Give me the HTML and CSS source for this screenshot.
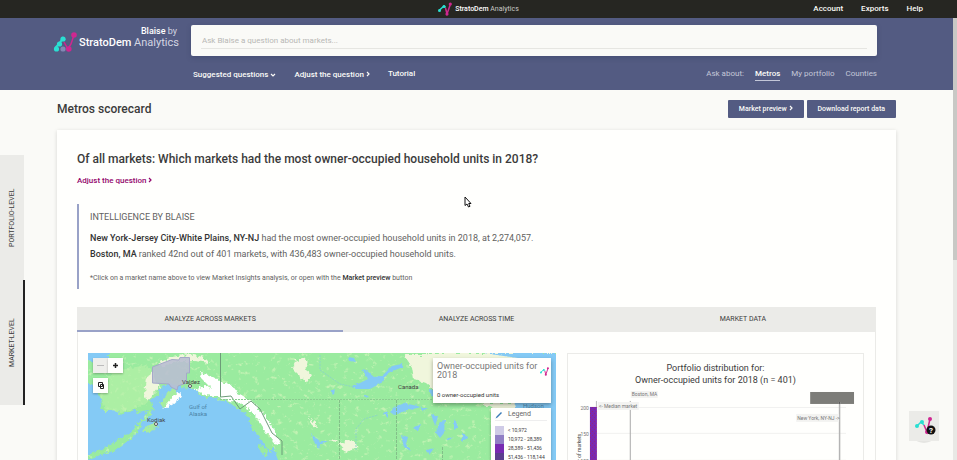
FILE: index.html
```html
<!DOCTYPE html>
<html lang="en">
<head>
<meta charset="utf-8">
<meta name="viewport" content="width=device-width, initial-scale=1">
<title>StratoDem Analytics</title>
<link rel="stylesheet" href="styles.css">
</head>
<body>
<svg class="defs" aria-hidden="true">
  <symbol id="mark" viewBox="0 0 24 22">
    <path d="M2 17 L6 13 L10 7 L12 9" fill="none" stroke="#2adfd2" stroke-width="2"/>
    <path d="M11 11 L15 18 L18 13 L21 4" fill="none" stroke="#cf2790" stroke-width="1.500"/>
    <circle cx="3.500" cy="18" r="2.600" fill="#2adfd2"/><circle cx="6.500" cy="13" r="2.600" fill="#2adfd2"/><circle cx="10" cy="8" r="2.600" fill="#2adfd2"/>
    <circle cx="10" cy="18" r="2.600" fill="#8288b4"/>
    <circle cx="15.800" cy="18" r="2.800" fill="#cf2790"/><circle cx="21" cy="4" r="2.800" fill="#cf2790"/>
  </symbol>
  <symbol id="mark-line" viewBox="0 0 14 14">
    <path d="M1 8.500 L6 4 L7.500 5.500" fill="none" stroke="#2adfd2" stroke-width="1.500"/>
    <path d="M7.500 6 L9 12 L12.500 2" fill="none" stroke="#cf2790" stroke-width="1.500"/>
    <circle cx="1.500" cy="8.500" r="1.500" fill="#2adfd2"/><circle cx="6" cy="4.500" r="1.500" fill="#2adfd2"/>
    <circle cx="9" cy="12" r="1.600" fill="#cf2790"/><circle cx="12.300" cy="2" r="1.600" fill="#cf2790"/>
  </symbol>
  <symbol id="right" viewBox="0 0 4 6"><path d="M1 1 L3 3 L1 5" fill="none" stroke="currentColor" stroke-width="1.200"/></symbol>
  <symbol id="down" viewBox="0 0 6 4"><path d="M1 1 L3 3 L5 1" fill="none" stroke="currentColor" stroke-width="1.200"/></symbol>
</svg>

<header class="topbar">
  <span></span>
  <a class="topbrand" href="#"><svg width="14" height="14"><use href="#mark-line"/></svg><span><b>StratoDem</b> Analytics</span></a>
  <nav class="topnav"><a href="#">Account</a><a href="#">Exports</a><a href="#">Help</a></nav>
</header>

<div class="viewport">
  <div class="page">
    <div class="hero">
      <a class="brand" href="#">
        <span class="brand-by"><b>Blaise</b> by</span>
        <span class="brand-name"><svg width="24" height="22"><use href="#mark"/></svg><span><b>StratoDem</b> Analytics</span></span>
      </a>
      <div class="ask">
        <div class="search"><input type="text" aria-label="Ask Blaise a question" placeholder="Ask Blaise a question about markets..."></div>
        <div class="asknav">
          <nav class="menu">
            <button type="button">Suggested questions <svg width="6" height="4"><use href="#down"/></svg></button>
            <button type="button">Adjust the question <svg width="4" height="6"><use href="#right"/></svg></button>
            <a href="#">Tutorial</a>
          </nav>
          <nav class="about"><span>Ask about:</span><a class="on" href="#">Metros</a><a href="#">My portfolio</a><a href="#">Counties</a></nav>
        </div>
      </div>
    </div>

    <main>
      <div class="heading">
        <h1>Metros scorecard</h1>
        <div class="actions">
          <button type="button">Market preview <svg width="4" height="6"><use href="#right"/></svg></button>
          <button type="button">Download report data</button>
        </div>
      </div>

      <article class="card">
        <h2>Of all markets: Which markets had the most owner-occupied household units in 2018?</h2>
        <a class="adjust" href="#">Adjust the question <svg width="4" height="6"><use href="#right"/></svg></a>
        <section class="intel">
          <h3>INTELLIGENCE BY BLAISE</h3>
          <p><b>New York-Jersey City-White Plains, NY-NJ</b> had the most owner-occupied household units in 2018, at 2,274,057.</p>
          <p><b>Boston, MA</b> ranked 42nd out of 401 markets, with 436,483 owner-occupied household units.</p>
          <p class="note">*Click on a market name above to view Market Insights analysis, or open with the <b>Market preview</b> button</p>
        </section>

        <div class="tabs">
          <button type="button" class="on">ANALYZE ACROSS MARKETS</button>
          <button type="button">ANALYZE ACROSS TIME</button>
          <button type="button">MARKET DATA</button>
        </div>
        <div class="panels">
          <div class="map">
            <svg class="mapart" viewBox="0 0 468 260" preserveAspectRatio="xMinYMin slice">
              <defs>
                <filter id="speckle" x="0" y="0" width="100%" height="100%" color-interpolation-filters="sRGB">
                  <feTurbulence type="fractalNoise" baseFrequency=".18 .22" numOctaves="4" seed="8"/>
                  <feColorMatrix values="0 0 0 0 .76  0 0 0 0 .95  0 0 0 0 .7  0 5 0 0 -3"/>
                </filter>
                <filter id="rough" x="-5%" y="-5%" width="110%" height="110%" color-interpolation-filters="sRGB">
                  <feTurbulence type="fractalNoise" baseFrequency=".25" numOctaves="3" seed="4" result="n"/>
                  <feDisplacementMap in="SourceGraphic" in2="n" scale="7" xChannelSelector="R" yChannelSelector="G"/>
                </filter>
                <filter id="ragged" x="-5%" y="-5%" width="110%" height="110%" color-interpolation-filters="sRGB">
                  <feTurbulence type="fractalNoise" baseFrequency=".3" numOctaves="2" seed="4" result="n"/>
                  <feDisplacementMap in="SourceGraphic" in2="n" scale="3" xChannelSelector="R" yChannelSelector="G"/>
                </filter>
              </defs>
              <rect width="468" height="260" fill="#9aeb9f"/>
              <rect width="468" height="260" filter="url(#speckle)"/>
              <g filter="url(#rough)">
                <g fill="#b9f2a8" fill-opacity=".6">
                  <path d="M24 18 L60 12 L66 22 L60 50 L46 56 L20 62 L12 45Z"/>
                </g>
                <g fill="#f0f6dc">
                  <path d="M58 26 L64 18 L68 30 L72 34 L60 48 L56 40Z"/>
                  <path d="M70 10 L84 4 L100 1 L116 4 L122 10 L106 8 L90 8 L72 14Z"/>
                  <path d="M206 8 L214 5 L220 8 L217 16 L224 22 L219 30 L210 22 L204 16Z"/>
                  <path d="M222 64 L226 68 L229 74 L224 73Z"/>
                  <path d="M250 91 L262 86 L270 93 L258 100Z M242 86 L252 88 L246 90Z"/>
                  <path d="M316 2 L352 2 L350 40 L338 30 L326 26 L324 14Z"/>
                  <path d="M340 0 H468 V10 L400 8 L342 10Z M390 50 L436 50 L444 62 L460 84 L450 82 L436 66 L416 62 L400 54Z"/>
                </g>
                <path fill="#84caf5" d="M-8 -8 H20 V6 L-8 10Z"/>
                <path fill="#84caf5" d="M-8 24 L5 32 L12 44 L14 58 L24 58 L36 61 L46 56 L50 60 L60 58 L57 64 L48 72 L42 80 L30 87 L18 95 L8 99 L-8 104 L-8 112 L12 102 L28 97 L38 89 L50 80 L53 72 L60 64 L66 55 L62 48 L70 42 L73 34 L82 30 L94 34 L100 36 L106 36 L112 42 L126 46 L142 50 L150 56 L158 61 L163 70 L172 80 L182 90 L188 100 L192 112 L200 270 L-8 270Z"/>
                <path fill="#a6eda0" d="M73 50 L80 38 L86 36 L92 42 L86 50 L75 54Z M55 77 L60 72 L68 70 L70 74 L58 80Z"/>
                <path fill="#fff" d="M80 50 L90 38 L94 44 L84 52 L74 56Z"/>
                <path fill="#fff" d="M106 36 L116 34 L124 36 L114 26 L112 20 L120 22 L132 28 L144 32 L150 40 L164 48 L170 56 L176 60 L184 74 L193 90 L188 92 L174 74 L164 58 L158 56 L154 50 L142 48 L128 43 L116 42Z"/>
                <path fill="#9aeb9f" d="M160 62 L166 64 L168 72 L174 80 L184 90 L184 100 L178 94 L172 84 L162 72Z M172 90 L180 98 L178 104 L170 96Z"/>
              </g>
              <g fill="#84caf5" filter="url(#ragged)">
                <path d="M264 33 L272 30 L280 26 L274 16 L278 17 L286 24 L294 23 L304 13 L314 11 L315 14 L302 19 L297 24 L295 29 L282 36 L268 36Z"/>
                <path d="M260 4 L266 5 L268 9 L261 8Z M243 38 L247 36 L246 42Z M275 42 L281 43 L278 45Z"/>
                <path d="M302 59 L308 53 L316 50 L334 54 L320 57 L306 62Z M295 60 L300 58 L300 65Z M333 55 L340 55 L334 58Z"/>
                <path d="M223 81 L232 88 L240 88 L232 92 L231 96 L226 89Z M325 75 L333 71 L330 78Z M343 61 L350 64 L347 73Z M352 68 L357 67 L356 80 L352 85 L348 80Z M313 82 L320 84 L318 91 L323 98 L316 94Z M338 97 L346 95 L341 102Z M366 66 L370 74 L366 77Z M374 80 L380 84 L374 89Z M340 37 L345 36 L345 44Z M358 86 L364 84 L361 88Z"/>
                <path d="M396 0 H476 V120 H462 L454 84 L446 68 L430 61 L426 48 L452 44 L450 8Z"/>
              </g>
              <g fill="none" stroke="#6d9c78" stroke-width="1">
                <path d="M132.500 0 V44 L143 43 L152 56 L163 48 L172 56 L184 80 L194 88 V102"/>
                <path d="M132 46.500 H376" stroke-dasharray="2 1" stroke="#8ccc91"/>
                <path d="M251.500 47 V260 M308.500 47 V260 M354.500 94 V260" stroke-dasharray="3 1" stroke="#83c089"/>
                <path d="M232 2 V17 L242 24 L252 31 L266 34 M268 97 V76 L276 66 L290 62" stroke="#8cd6c4" stroke-dasharray="2 1"/>
              </g>
              <path d="M64.500 14 L84 6.500 L91 7 L92 4.500 H101.500 V20 H98.500 V30 L90 33 L89 37 L83 34 L81 31 L64.500 30Z" fill="#b9bfd0" fill-opacity=".9" stroke="#a5a9c9" stroke-width="1"/>
              <g class="places">
                <text x="94" y="31">Valdez</text><circle cx="102" cy="33" r="1.500"/>
                <text x="59" y="69">Kodiak</text><circle cx="68" cy="71" r="1.500"/>
                <text x="310" y="36">Canada</text>
                <text class="sea" x="101" y="56">Gulf of</text><text class="sea" x="101" y="63">Alaska</text>
                <text class="sea" x="435" y="55">Hudson</text>
              </g>
            </svg>
            <div class="zoomers">
              <div class="pair"><button type="button" class="off" aria-label="Zoom out"><svg width="7" height="7"><path d="M0 3.500 H7" stroke="#bbb"/></svg></button><button type="button" aria-label="Zoom in"><svg width="7" height="7"><path d="M1 3.500 H6 M3.500 1 V6" stroke="#222" stroke-width="1.500"/></svg></button></div>
              <button type="button" aria-label="Select area"><svg width="8" height="8" fill="none" stroke="#222"><path d="M1.500 .5 H5.500 V4.500 H1.500Z M3.500 2.500 H6.500 V6.500 H3.500Z"/></svg></button>
            </div>
            <div class="overlays">
              <div class="readout">
                <div class="readout-head"><span>Owner-occupied units for 2018</span><svg width="9" height="9"><use href="#mark-line"/></svg></div>
                <p>0 owner-occupied units</p>
              </div>
              <div class="legend">
                <div class="legend-head"><svg width="8" height="8"><path d="M.5 7.500 L1.500 5.500 L6 1 L7 2 L2.500 6.500Z" fill="#3b7cb8"/></svg><span>Legend</span></div>
                <ul><li class="q1">&lt; 10,972</li><li class="q2">10,972 - 28,389</li><li class="q3">28,389 - 51,436</li><li class="q4">51,436 - 118,144</li></ul>
              </div>
            </div>
          </div>
          <div class="chart">
            <h4>Portfolio distribution for:<br>Owner-occupied units for 2018 (n = 401)</h4>
            <svg class="plot" viewBox="0 0 296 150">
              <defs><pattern id="dots" width="4" height="4" patternUnits="userSpaceOnUse"><rect width="4" height="4" fill="#782ab2"/><path d="M0 0h1v1h-1z M2 2h1v1h-1z" fill="#9c2470"/></pattern></defs>
              <path d="M22 16.500 H279 M22 42.500 H279 M22 69.500 H279" stroke="#f1f1ef"/>
              <rect x="22" y="16" width="7" height="134" fill="url(#dots)"/>
              <path d="M28.500 10 V16" stroke="#bbb"/><path d="M62.500 10 V150" stroke="#aaa"/>
              <rect x="243" y="1" width="44" height="12" fill="#7d7d79"/>
              <path d="M272.500 11 V150" stroke="#b4b4b4" stroke-width="1.500"/><path d="M272.500 11 V13" stroke="#555"/>
              <g fill="#f3f3f1"><rect x="63" y="0" width="27" height="7"/><rect x="30" y="11" width="41" height="8"/><rect x="229" y="23" width="43" height="8"/></g>
              <g class="ticks">
                <text x="21" y="19" text-anchor="end">200</text><text x="21" y="45" text-anchor="end">150</text><text x="21" y="72" text-anchor="end">100</text>
                <text x="64" y="5">Boston, MA</text><text x="31" y="17">&lt;- Median market</text><text x="230" y="29">New York, NY-NJ -&gt;</text>
                <text class="axis" transform="translate(13 86) rotate(-90)">Number of markets</text>
              </g>
            </svg>
          </div>
        </div>
      </article>
    </main>
  </div>
  <div class="scroll"><div class="thumb"></div></div>
</div>

<nav class="side"><a href="#">PORTFOLIO-LEVEL</a><a class="on" href="#">MARKET-LEVEL</a></nav>
<button type="button" class="help" aria-label="Help chat"><svg width="30" height="34"><circle cx="15" cy="17" r="15" fill="#e5e5e2"/><rect width="30" height="30" fill="#ebebe8"/><path d="M7 16 L12 11 L15 14" fill="none" stroke="#2adfd2" stroke-width="1.500"/><path d="M15 14 L18 21 L21 8" fill="none" stroke="#cf2790" stroke-width="1.500"/><circle cx="8" cy="15" r="2" fill="#2adfd2"/><circle cx="13" cy="11" r="2" fill="#2adfd2"/><circle cx="21" cy="8" r="2" fill="#cf2790"/><circle cx="18" cy="21" r="2" fill="#cf2790"/><circle cx="22" cy="19" r="4.500" fill="#111"/><text x="20" y="22">?</text></svg></button>
<svg class="pointer" width="8" height="12" aria-hidden="true"><path d="M1 1 V9.500 L3 8 L4.500 11 L6 10.300 L4.700 7.500 H7Z" fill="#fff" stroke="#111"/></svg>
</body>
</html>
```

FILE: styles.css
```css
* { box-sizing: border-box; }
body { margin: 0; height: 100vh; overflow: hidden; display: flex; flex-direction: column; background: #fafaf7; color: #3b3b3b; font: 8px/12px Roboto, "Liberation Sans", sans-serif; }
h1, h2, h3, h4, p, ul { margin: 0; padding: 0; }
h1, h2, h3, h4, b { font-weight: 500; }
a { color: inherit; text-decoration: none; }
button { font: inherit; color: inherit; border: 0; padding: 0; background: none; }
.defs { position: absolute; width: 0; height: 0; }

.topbar { flex: none; height: 18px; display: grid; grid-template-columns: 1fr auto 1fr; align-items: center; padding: 0 34px; background: #262622; color: #fafaf7; }
.topbrand { display: flex; align-items: center; gap: 3px; color: #c9c9c5; font-size: 7px; }
.topbrand b { color: #fff; }
.topnav { display: flex; justify-content: flex-end; gap: 18px; font-weight: 500; }

.viewport { flex: 1; min-height: 0; display: flex; }
.page { flex: 1; min-width: 0; overflow: hidden; }
.scroll { flex: none; width: 4px; background: #e8e8e5; }
.thumb { height: 242px; background: #c8c8c5; }

.hero { height: 72px; display: flex; gap: 14px; padding: 7px 76px 0 53px; background: #535b82; color: #fafaf7; }
.brand { flex: none; width: 124px; font-size: 11px; color: #d3d6e2; }
.brand b { color: #fff; }
.brand-by { display: block; text-align: right; font-size: 9px; }
.brand-name { display: flex; gap: 2px; white-space: nowrap; }
.brand-name svg { flex: none; margin-top: -6px; }
.ask { flex: 1; }
.search { height: 31px; padding: 8px 10px; background: #fafaf7; border-radius: 2px; box-shadow: 0 2px 4px #3c436a80; }
.search input { display: block; width: 100%; height: 16px; padding: 0 1px; border: 0; border-bottom: 1px solid #e6e6e2; background: none; font: inherit; outline: 0; }
.search input::placeholder { color: #b8b8b5; opacity: 1; }
.asknav { display: flex; justify-content: space-between; padding: 12px 0 0 2px; }
.menu { display: flex; gap: 18px; font-weight: 500; }
.about { display: flex; gap: 11px; color: #c3c7d8; }
.about .on { color: #fafaf7; font-weight: 500; border-bottom: 1px solid #c3c7d8; }

main { padding: 10px 57px 0; }
.heading { display: flex; justify-content: space-between; height: 30px; }
h1, h2 { font-size: 12px; line-height: 18px; }
.actions { display: flex; gap: 3px; }
.actions button { height: 18px; padding: 0 11px; border-radius: 1px; background: #535b82; color: #fafaf7; font-size: 7px; font-weight: 500; }
.card { padding: 20px 20px 0; background: #fffffd; box-shadow: 0 1px 4px #00000026; }
.adjust { display: block; margin-top: 7px; color: #93056c; font-weight: 500; }
.intel { margin: 17px 0 18px; padding: 6px 0 3px 11px; border-left: 2px solid #99a2c7; color: #62625f; font-size: 9px; line-height: 16px; }
.intel h3 { font-size: 9px; line-height: 14px; font-weight: 400; margin-bottom: 6px; }
.intel b { color: #333; }
.intel .note { margin-top: 8px; font-size: 7px; }

.tabs { display: grid; grid-template-columns: repeat(3, 1fr); background: #ebebe8; }
.tabs button { height: 25px; font-size: 7px; border-bottom: 2px solid transparent; }
.tabs .on { border-color: #99a2c7; }
.panels { display: grid; grid-template-columns: 468fr 297fr; gap: 11px; padding: 21px 11px 11px 10px; border: 1px solid #ebebe8; border-top: 0; }
.map { position: relative; height: 260px; overflow: hidden; }
.mapart { display: block; width: 100%; height: 100%; }
.places { font-size: 6px; fill: #444; }
.places circle { fill: #fff; stroke: #555; }
.places .sea { fill: #4c84a6; }
.zoomers { position: absolute; left: 5px; top: 5px; display: flex; flex-direction: column; gap: 5px; align-items: flex-start; }
.zoomers button { width: 15px; height: 15px; display: grid; place-items: center; background: #fffffd; box-shadow: 0 1px 2px #0004; }
.zoomers .off { background: #eeeeeb; }
.pair { display: flex; }
.overlays { position: absolute; top: 5px; right: 5px; display: flex; flex-direction: column; align-items: flex-end; gap: 5px; }
.readout { width: 118px; height: 45px; padding: 4px 2px 4px 4px; background: #fffffd; box-shadow: 0 2px 4px #0005; }
.readout-head { display: flex; align-items: center; font-size: 9px; line-height: 9px; color: #777; }
.readout-head svg { flex: none; }
.readout p { margin-top: 10px; font-size: 6px; line-height: 9px; color: #333; }
.legend { width: 60px; padding: 2px 4px; background: #fffffd; box-shadow: 0 1px 3px #0004; }
.legend-head { display: flex; align-items: center; gap: 5px; padding-bottom: 1px; border-bottom: 1px solid #eee; font-size: 7px; line-height: 9px; color: #666; }
.legend ul { list-style: none; margin-top: 5px; white-space: nowrap; font-size: 5px; line-height: 9px; }
.legend li { border-left: 9px solid; padding-left: 4px; }
.legend .q1 { border-color: #cfcbe6; }
.legend .q2 { border-color: #917fc5; }
.legend .q3 { border-color: #782ab2; }
.legend .q4 { border-color: #5d3f8f; }
.chart { border: 1px solid #ebebe8; padding-top: 8px; }
h4 { font-size: 9px; line-height: 12px; font-weight: 400; text-align: center; }
.plot { display: block; width: 100%; margin-top: 5px; }
.ticks { font-size: 5px; fill: #777; }
.ticks .axis { fill: #444; }

.side { position: fixed; left: 0; top: 155px; width: 25px; }
.side a { display: grid; place-items: center; width: 24px; height: 125px; writing-mode: vertical-rl; transform: rotate(180deg); background: #ebebe8; font-size: 7px; }
.side .on { width: 25px; border-left: 2px solid #222; }
.help { position: fixed; right: 18px; top: 411px; width: 30px; height: 34px; }
.help svg { display: block; }
.help text { fill: #fff; font-size: 8px; font-weight: 700; }
.pointer { position: fixed; left: 464px; top: 196px; }
```
